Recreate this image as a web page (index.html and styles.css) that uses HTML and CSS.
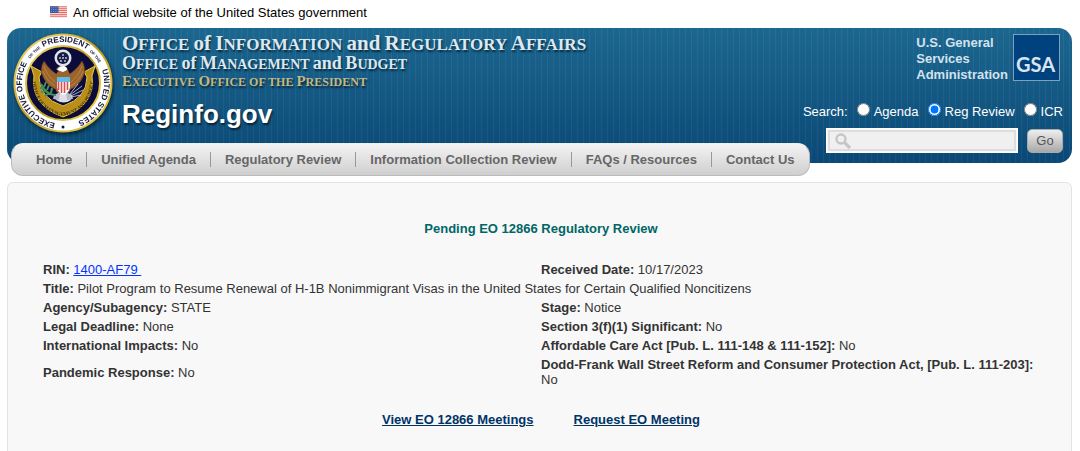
FILE: index.html
```html
<!DOCTYPE html>
<html lang="en">
<head>
  <meta charset="UTF-8" />
  <meta name="viewport" content="width=device-width, initial-scale=1.0" />
  <title>Pending EO 12866 Regulatory Review</title>
  <link rel="stylesheet" href="styles.css">
</head>
<body>
  <div class="gov-banner">
    <svg class="flag" viewBox="0 0 18 12" aria-hidden="true">
      <rect width="18" height="12" fill="#fbe3e0"/>
      <path d="M0 .5h18M0 2.5h18M0 4.5h18M0 6.5h18M0 8.5h18M0 10.5h18" stroke="#e0645c" stroke-width="1"/>
      <rect width="9" height="7" fill="#2f55a4"/>
      <path d="M1 1.5h7M1 3.5h7M1 5.5h7" stroke="#8fa5d6" stroke-width="1" stroke-dasharray="1 1"/>
    </svg>
    <span>An official website of the United States government</span>
  </div>

  <header class="header">
    <svg class="seal" viewBox="0 0 100 100" role="img" aria-label="Executive Office of the President">
      <defs>
        <path id="ring" d="M50 91 A41 41 0 1 1 50.1 91"/>
        <path id="ribbonText" d="M19 43 Q20 78 50 83 Q80 78 81 43"/>
        <linearGradient id="gold" x1="0" y1="0" x2="1" y2="1">
          <stop offset="0" stop-color="#f4e27a"/>
          <stop offset=".5" stop-color="#bf9a1c"/>
          <stop offset="1" stop-color="#f3dc55"/>
        </linearGradient>
      </defs>
      <circle cx="50" cy="50" r="49.500" fill="url(#gold)"/>
      <circle cx="50" cy="50" r="47.500" fill="#fff"/>
      <circle cx="50" cy="50" r="37" fill="#0b0b3c" stroke="url(#gold)" stroke-width="2"/>
      <g class="ring-text">
        <text><textPath href="#ring" startOffset="18%" text-anchor="middle">EXECUTIVE OFFICE</textPath></text>
        <text class="ring-small"><textPath href="#ring" startOffset="38%" text-anchor="middle">OF THE</textPath></text>
        <text><textPath href="#ring" startOffset="51%" text-anchor="middle">PRESIDENT</textPath></text>
        <text class="ring-small"><textPath href="#ring" startOffset="64%" text-anchor="middle">OF THE</textPath></text>
        <text><textPath href="#ring" startOffset="82%" text-anchor="middle">UNITED STATES</textPath></text>
      </g>
      <circle cx="50" cy="94" r="1.500" fill="#14143c"/>
      <!-- ribbon -->
      <path d="M18 33l11 6-3 5q0 21 24 29 24-8 24-29l-3-5 11-6-3 10q4 29-29 41-33-12-29-41z" fill="#b98f1a" stroke="#e6c846" stroke-width="1"/>
      <text class="ribbon-text"><textPath href="#ribbonText" startOffset="50%" text-anchor="middle">OFFICE OF MANAGEMENT AND BUDGET</textPath></text>
      <!-- star cluster -->
      <circle cx="50" cy="25" r="8.500" fill="#dfe3ee"/>
      <circle cx="50" cy="25" r="6" fill="#171c45"/>
      <g fill="#b9c0d8">
        <circle cx="50" cy="22" r="1"/><circle cx="47" cy="25" r="1"/><circle cx="50" cy="25" r="1"/>
        <circle cx="53" cy="25" r="1"/><circle cx="48" cy="28" r="1"/><circle cx="52" cy="28" r="1"/>
      </g>
      <!-- eagle -->
      <path d="M31 28q-5 8-1 16 4 9 14 13l3-14q-10-5-16-15zM69 28q5 8 1 16-4 9-14 13l-3-14q10-5 16-15z" fill="#9a642c" stroke="#5c3513" stroke-width=".6"/>
      <path d="M31 33q3 10 12 17M30 38q3 9 12 15M69 33q-3 10-12 17M70 38q-3 9-12 15" fill="none" stroke="#c28b4c" stroke-width=".8"/>
      <path d="M42 44q2-5 5-8-3 0-4 1 1-4 6-4 5 0 6 4l3 7-1 14q-7 8-14 0z" fill="#9a642e"/>
      <path d="M44 37q2-4 6-4 4 0 4 4l-4 2z" fill="#fff"/>
      <path d="M47 60h7l4 7q-7 5-15 0z" fill="#dfe0e6"/>
      <path d="M41 62l6-3-1 8-6-1zM59 62l-6-3 1 8 6-1z" fill="#b8bac9"/>
      <path d="M44 44h13v10q-1 6-6.500 8-5.500-2-6.500-8z" fill="#fff"/>
      <path d="M45.500 48v9M48.500 48v12M51.500 48v12M54.500 48v9" stroke="#dc4a4a" stroke-width="1.600"/>
      <path d="M44 44h13v5H44z" fill="#62b8e8"/>
      <!-- olive branch and arrows -->
      <path d="M43 62q-9 1-15-11M31 55l-4 0M33 58l-5 1M36 60l-4 3M31 54l2-5M34 57l2-5M38 60l1-5" fill="none" stroke="#46905a" stroke-width="2"/>
      <path d="M57 62l12-9M58 63l12-6M57 61l8-10M58 64l10-2" stroke="#d6dae6" stroke-width=".8"/>
    </svg>

    <div class="titles">
      <div class="title-main"><i>O</i>FFICE <i>of</i> <i>I</i>NFORMATION <i>and</i> <i>R</i>EGULATORY <i>A</i>FFAIRS</div>
      <div class="title-sub"><i>O</i>FFICE <i>of</i> <i>M</i>ANAGEMENT <i>and</i> <i>B</i>UDGET</div>
      <div class="title-eop"><i>E</i>XECUTIVE <i>O</i>FFICE OF THE <i>P</i>RESIDENT</div>
      <div class="site-name">Reginfo.gov</div>
    </div>

    <div class="header-right">
      <div class="gsa">
        <span class="gsa-name">U.S. General<br>Services<br>Administration</span>
        <svg class="gsa-logo" viewBox="0 0 47 47" role="img" aria-label="GSA">
          <rect x=".5" y=".5" width="46" height="46" fill="#00427e" stroke="#7f9fc0"/>
          <text x="3" y="38">GSA</text>
        </svg>
      </div>
      <form class="search">
        <div class="search-types">
          <span>Search:</span>
          <label><input type="radio" name="type"> Agenda</label>
          <label><input type="radio" name="type" checked> Reg Review</label>
          <label><input type="radio" name="type"> ICR</label>
        </div>
        <div class="search-row">
          <div class="search-box">
            <svg class="magnifier" viewBox="0 0 16 16" aria-hidden="true">
              <circle cx="6" cy="6" r="4.500" fill="none" stroke="#c6c6c6" stroke-width="2.400"/>
              <path d="M9.500 9.500l5.500 5.500" stroke="#c6c6c6" stroke-width="3.200"/>
            </svg>
            <input type="text" aria-label="Search">
          </div>
          <button type="button" class="go">Go</button>
        </div>
      </form>
    </div>
  </header>

  <nav class="nav">
    <a href="#">Home</a>
    <a href="#">Unified Agenda</a>
    <a href="#">Regulatory Review</a>
    <a href="#">Information Collection Review</a>
    <a href="#">FAQs / Resources</a>
    <a href="#">Contact Us</a>
  </nav>

  <main class="panel">
    <h1>Pending EO 12866 Regulatory Review</h1>
    <table class="details">
      <tr>
        <td><b>RIN:</b> <a class="rin" href="#">1400-AF79&nbsp;</a></td>
        <td><b>Received Date:</b> 10/17/2023</td>
      </tr>
      <tr>
        <td colspan="2"><b>Title:</b> Pilot Program to Resume Renewal of H-1B Nonimmigrant Visas in the United States for Certain Qualified Noncitizens</td>
      </tr>
      <tr>
        <td><b>Agency/Subagency:</b> STATE</td>
        <td><b>Stage:</b> Notice</td>
      </tr>
      <tr>
        <td><b>Legal Deadline:</b> None</td>
        <td><b>Section 3(f)(1) Significant:</b> No</td>
      </tr>
      <tr>
        <td><b>International Impacts:</b> No</td>
        <td><b>Affordable Care Act [Pub. L. 111-148 &amp; 111-152]:</b> No</td>
      </tr>
      <tr>
        <td><b>Pandemic Response:</b> No</td>
        <td><b>Dodd-Frank Wall Street Reform and Consumer Protection Act, [Pub. L. 111-203]:</b> No</td>
      </tr>
    </table>
    <div class="meeting-links">
      <a href="#">View EO 12866 Meetings</a>
      <a href="#">Request EO Meeting</a>
    </div>
  </main>
</body>
</html>
```
FILE: styles.css
```css
* {
  box-sizing: border-box;
}

body {
  font-family: "Liberation Sans", Arial, sans-serif;
  font-size: 13px;
  line-height: 15px;
  color: #333;
  background: #fff;
  margin: 0;
  padding: 0 8px 0 7px;
  min-height: 100vh;
  display: flex;
  flex-direction: column;
}

.gov-banner {
  display: flex;
  align-items: center;
  gap: 6px;
  height: 28px;
  padding: 0 43px 4px;
  color: #000;
}

.flag {
  width: 17px;
  height: 12px;
}

.header {
  display: flex;
  align-items: flex-start;
  padding: 5px 9px 10px 6px;
  border-radius: 14px;
  background:
    repeating-linear-gradient(90deg, rgba(255, 255, 255, 0.05) 0, rgba(255, 255, 255, 0.05) 1px, transparent 1px, transparent 6px),
    linear-gradient(#1c678f, #0a4876);
}

.seal {
  flex: none;
  width: 100px;
  height: 100px;
  filter: drop-shadow(1px 2px 2px rgba(0, 0, 0, 0.6));
}

.ring-text {
  font: bold 8px "Liberation Sans", Arial, sans-serif;
  fill: #14143c;
}

.ring-small {
  font-size: 4px;
}

.ribbon-text {
  font: bold 5px "Liberation Serif", serif;
  fill: #3d2d04;
}

.titles {
  flex: 1;
  padding-left: 9px;
  font-family: "Liberation Serif", "Times New Roman", serif;
  font-weight: bold;
  color: #dde8f1;
  white-space: nowrap;
  text-shadow: 1px 2px 2px rgba(0, 0, 0, 0.6);
}

.titles i {
  font-style: normal;
}

.title-main {
  font-size: 17px;
  line-height: 20px;
}

.title-main i {
  font-size: 21px;
}

.title-sub {
  font-size: 14px;
  line-height: 17px;
}

.title-sub i {
  font-size: 18px;
}

.title-eop {
  font-size: 12px;
  line-height: 17px;
  color: #c2b985;
}

.title-eop i {
  font-size: 15px;
}

.site-name {
  margin-top: 8px;
  font: bold 26px/30px "Liberation Sans", Arial, sans-serif;
  color: #fff;
}

.header-right {
  display: flex;
  flex-direction: column;
  align-items: flex-end;
  color: #fff;
}

.gsa {
  display: flex;
  gap: 5px;
  padding: 1px 3px 0 0;
}

.gsa-name {
  padding-top: 1px;
  font-weight: bold;
  line-height: 16px;
  color: #d3e2ed;
}

.gsa-logo {
  width: 47px;
  height: 47px;
  font: bold 20px Lato, sans-serif;
  fill: #dbe5ef;
}

.search {
  margin-top: 19px;
}

.search-types {
  display: flex;
  justify-content: flex-end;
  gap: 9px;
  line-height: 20px;
}

.search-types label {
  display: flex;
  gap: 4px;
}

.search-types input {
  width: 13px;
  height: 13px;
  margin: 1px 0 0;
}

.search-row {
  display: flex;
  justify-content: flex-end;
  align-items: center;
  gap: 9px;
  margin-top: 6px;
}

.search-box {
  display: flex;
  align-items: center;
  width: 192px;
  height: 25px;
  padding: 0 6px 0 8px;
  background: #f0f0f0;
  border: 1px solid #fff;
  box-shadow: inset 0 0 0 1px #f8f8f8, inset 0 0 0 3px #ddd;
}

.magnifier {
  flex: none;
  width: 16px;
  height: 16px;
}

.search-box input {
  flex: 1;
  min-width: 0;
  border: none;
  background: none;
  outline: none;
}

.go {
  width: 36px;
  height: 24px;
  padding: 0;
  border: 1px solid #aaa;
  border-radius: 5px;
  background: linear-gradient(#eee, #ccc 50%, #a8a8a8);
  font: 13px "Liberation Sans", Arial, sans-serif;
  color: #555;
  cursor: pointer;
}

.nav {
  display: flex;
  align-items: center;
  align-self: flex-start;
  height: 33px;
  margin: -20px 0 6px 4px;
  padding-left: 10px;
  border: 1px solid #bbb;
  border-top-color: #eee;
  border-radius: 12px;
  background: linear-gradient(#f3f3f3, #cfcfcf);
  position: relative;
}

.nav a {
  padding: 0 14px;
  border-left: 1px solid #999;
  font-weight: bold;
  color: #666;
  text-decoration: none;
  white-space: nowrap;
}

.nav a:first-child {
  border-left: none;
}

.panel {
  flex: 1;
  padding: 38px 32px 24px 35px;
  border: 1px solid #e4e4e4;
  border-bottom: none;
  border-radius: 6px 6px 0 0;
  background: #f8f8f8;
}

.panel h1 {
  margin: 0 0 24px;
  font-size: 13px;
  line-height: 15px;
  text-align: center;
  color: #006666;
}

.details {
  width: 100%;
  table-layout: fixed;
  border-collapse: collapse;
}

.details td {
  padding: 2px 0;
}

.rin {
  color: #0433ff;
}

.meeting-links {
  display: flex;
  justify-content: center;
  gap: 40px;
  margin-top: 23px;
}

.meeting-links a {
  font-weight: bold;
  color: #003366;
}
```
